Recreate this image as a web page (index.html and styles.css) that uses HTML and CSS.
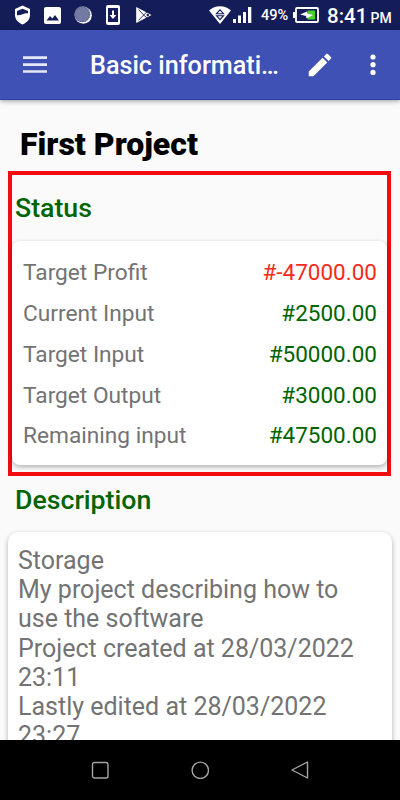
FILE: index.html
```html
<!DOCTYPE html>
<html lang="en">
<head>
    <meta charset="UTF-8">
    <title>Basic information</title>
    <link rel="stylesheet" href="styles.css">
</head>
<body>
<div class="statusbar">
    <div class="notices">
        <svg width="17" height="20" viewBox="0 0 17 20">
            <path d="M8.5 0.5 L16 4 V10 C16 14.5 13 17.5 8.5 19.5 C4 17.5 1 14.5 1 10 V4 Z" fill="#fff"/>
            <path d="M3 6 L8.5 3.8 L14 6 V8.5 C11 7.500 8 10.500 3 10.300 Z" fill="#141d58"/>
        </svg>
        <svg width="17" height="17" viewBox="0 0 17 17">
            <rect width="17" height="17" rx="2" fill="#fff"/>
            <path d="M2.500 13.500 L6 9 L8.300 11.500 L11 8 L15 13.500 Z" fill="#141d58"/>
        </svg>
        <svg width="18" height="18" viewBox="0 0 18 18">
            <circle cx="9.300" cy="9.200" r="8.500" fill="#fff"/>
            <circle cx="8.300" cy="8.300" r="8" fill="#737aa3"/>
            <circle cx="8.300" cy="8.300" r="7.200" fill="none" stroke="#5f6797" stroke-width="1.400" stroke-dasharray="1 1.500"/>
        </svg>
        <svg width="14" height="20" viewBox="0 0 14 20">
            <rect width="14" height="20" rx="2" fill="#fff"/>
            <rect x="2" y="3" width="10" height="14" fill="#141d58"/>
            <path d="M6 5.500 H8 V10 H10.500 L7 14 L3.500 10 H6 Z" fill="#fff"/>
        </svg>
        <svg width="17" height="18" viewBox="0 0 17 18">
            <path d="M1.200 1 L16.500 9 L1.200 17 Z" fill="#fff"/>
            <path d="M3.500 3.500 L8.700 9 L3.500 14.500 M8.700 9 L13 4.800 M8.700 9 L13 13.200" fill="none" stroke="#141d58" stroke-width="0.900"/>
            <circle cx="12.800" cy="9" r="1.200" fill="#141d58"/>
        </svg>
    </div>
    <div class="system">
        <svg class="wifi" width="22" height="18" viewBox="0 0 22 18">
            <path d="M0 4.500 C6 -1.300 16 -1.300 22 4.500 L11 18 Z" fill="#fff"/>
            <path d="M7.500 7.700 L11 3.800 L14.500 7.700 Z M7.500 9.700 L11 13.600 L14.500 9.700 Z" fill="none" stroke="#141d58" stroke-width="1.100"/>
        </svg>
        <svg class="signal" width="19" height="16" viewBox="0 0 19 16">
            <path d="M0 12 H3 V16 H0 Z M5 8.500 H8 V16 H5 Z M10 5 H13 V16 H10 Z M15 0 H18.300 V16 H15 Z" fill="#fff"/>
        </svg>
        <span class="percent">49%</span>
        <svg class="battery" width="26" height="16" viewBox="0 0 26 16">
            <rect x="3" y="1" width="22" height="14" rx="1" fill="none" stroke="#fff" stroke-width="1.800"/>
            <rect x="0" y="5" width="2.500" height="6" fill="#fff"/>
            <rect x="14.500" y="3.500" width="7.500" height="9" fill="#46d12d"/>
            <path d="M7 7.500 L14 4.500 L14.500 6.500 L20 8 L13.500 11.500 L13 9 Z" fill="#fff"/>
        </svg>
        <span class="time">8:41 <small>PM</small></span>
    </div>
</div>
<header class="appbar">
    <svg class="menu" width="24" height="18" viewBox="0 0 24 18">
        <path d="M0 1.700 H24 M0 8.600 H24 M0 15.500 H24" stroke="#e6e8f6" stroke-width="2.700"/>
    </svg>
    <div class="title">Basic informati…</div>
    <svg class="edit" width="30" height="30" viewBox="0 0 24 24">
        <path d="M3 17.250V21h3.750L17.810 9.940l-3.750-3.750L3 17.250zM20.710 7.040c.39-.39.39-1.020 0-1.410l-2.340-2.340c-.39-.39-1.020-.39-1.410 0l-1.830 1.830 3.750 3.750 1.830-1.830z" fill="#fff"/>
    </svg>
    <svg class="more" width="6" height="22" viewBox="0 0 6 22">
        <circle cx="3" cy="3" r="2.600" fill="#fff"/>
        <circle cx="3" cy="10.700" r="2.600" fill="#fff"/>
        <circle cx="3" cy="18.400" r="2.600" fill="#fff"/>
    </svg>
</header>
<main class="content">
    <h1>First Project</h1>
    <section class="status">
        <h2>Status</h2>
        <ul class="card rows">
            <li><span>Target Profit</span><b class="minus">#-47000.00</b></li>
            <li><span>Current Input</span><b>#2500.00</b></li>
            <li><span>Target Input</span><b>#50000.00</b></li>
            <li><span>Target Output</span><b>#3000.00</b></li>
            <li><span>Remaining input</span><b>#47500.00</b></li>
        </ul>
    </section>
    <section class="description">
        <h2>Description</h2>
        <p class="card">Storage<br>My project describing how to<br>use the software<br>Project created at 28/03/2022<br>23:11<br>Lastly edited at 28/03/2022<br>23:27</p>
    </section>
</main>
<nav class="navbar">
    <svg width="18" height="18" viewBox="0 0 18 18">
        <rect x="1.500" y="1.500" width="15.500" height="15.500" rx="2" fill="none" stroke="#a5a5a5" stroke-width="1.400"/>
    </svg>
    <svg width="18" height="18" viewBox="0 0 18 18">
        <circle cx="9.300" cy="9.300" r="8.200" fill="none" stroke="#a5a5a5" stroke-width="1.400"/>
    </svg>
    <svg width="18" height="18" viewBox="0 0 18 18">
        <path d="M16.500 1 V17 L1 9 Z" fill="none" stroke="#a5a5a5" stroke-width="1.400" stroke-linejoin="round"/>
    </svg>
</nav>
</body>
</html>
```

FILE: styles.css
```css
* {
    box-sizing: border-box;
}
body {
    display: flex;
    flex-direction: column;
    margin: 0;
    height: 800px;
    overflow: hidden;
    font-family: Roboto, sans-serif;
    background: #fafafa;
}
svg {
    display: block;
    flex: none;
}
.statusbar {
    display: flex;
    flex: none;
    justify-content: space-between;
    height: 30px;
    padding: 0 10px 0 14px;
    background: #141d58;
    color: #fff;
}
.notices, .system {
    display: flex;
    align-items: center;
}
.notices {
    gap: 13px;
}
.notices svg:nth-child(4) {
    margin-left: 1px;
}
.notices svg:nth-child(5) {
    margin-left: 2px;
}
.wifi {
    margin-right: 2px;
}
.signal {
    margin-right: 9px;
}
.percent {
    width: 28px;
    padding-top: 1px;
    font-size: 14.500px;
    font-weight: 500;
    white-space: nowrap;
}
.battery {
    margin: 0 8px 0 4px;
}
.time {
    width: 63px;
    padding-top: 3px;
    font-size: 20.500px;
    font-weight: 500;
    line-height: 30px;
    white-space: nowrap;
}
.time small {
    margin-left: -2px;
    font-size: 14px;
}
.appbar {
    display: flex;
    flex: none;
    align-items: center;
    height: 70px;
    padding: 0 24px 0 23px;
    border-bottom: 1px solid #2b40a5;
    background: #3f51b5;
    color: #fff;
    box-shadow: 0 1px 5px rgba(0, 0, 0, 0.4);
}
.title {
    width: 192px;
    margin-left: 43px;
    padding-top: 2px;
    font-size: 25.200px;
    font-weight: 500;
    white-space: nowrap;
}
.edit {
    margin-left: 23px;
}
.more {
    margin-left: auto;
}
.content {
    flex: 1;
    min-height: 0;
    padding: 0 8px;
    overflow: hidden;
}
h1 {
    margin: 0;
    padding: 24px 0 0 12px;
    height: 71px;
    font-size: 32px;
    line-height: 40px;
    font-weight: 900;
    color: #000;
}
h2 {
    margin: 0;
    font-size: 26.700px;
    line-height: 32px;
    font-weight: 500;
    color: #006400;
}
.card {
    margin: 0;
    border-radius: 8px;
    background: #fff;
    box-shadow: 0 2px 5px rgba(0, 0, 0, 0.3);
    color: #737373;
}
.status {
    height: 305px;
    margin-right: 1px;
    border: 4px solid #f20c12;
}
.status h2 {
    padding: 17px 0 0 3px;
    height: 66px;
}
.rows {
    height: 224px;
    padding: 11px 10px 0 11px;
    list-style: none;
}
.rows li {
    display: flex;
    justify-content: space-between;
    height: 40.850px;
    font-size: 22.700px;
    line-height: 41px;
}
.rows b {
    font-weight: 400;
    font-size: 22.500px;
    color: #006400;
}
.rows .minus {
    color: #f72a1c;
}
.description h2 {
    padding: 8px 0 0 7px;
    height: 56px;
}
.description .card {
    height: 260px;
    padding: 14px 10px;
    border-radius: 10px;
    font-size: 25px;
    line-height: 29.200px;
    white-space: nowrap;
}
.navbar {
    display: flex;
    flex: none;
    align-items: center;
    justify-content: center;
    gap: 82px;
    height: 60px;
    background: #000;
}
```
